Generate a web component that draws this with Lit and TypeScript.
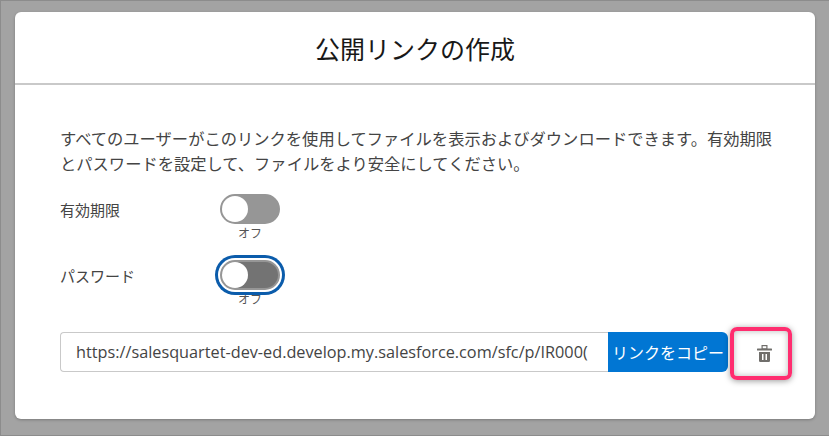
import { LitElement, html, css } from "lit";
import { customElement } from "lit/decorators.js";

@customElement("app-root")
export class AppRoot extends LitElement {
  static styles = css`
    :host {
      display: block;
      width: 829px;
      height: 436px;
      box-sizing: border-box;
      background: #a3a3a3;
      border: 1px solid #8c8c8c;
      border-width: 1px 0 1px 1px;
      padding: 11px 14px 16px 14px;
      font-family: "Open Sans", "Noto Sans CJK JP", sans-serif;
      color: #444444;
      overflow: hidden;
    }
    .card {
      width: 800px;
      height: 407px;
      background: #fff;
      border-radius: 6px;
      box-shadow: 0 1px 3px rgba(0, 0, 0, 0.25);
      display: flex;
      flex-direction: column;
    }
    .head {
      height: 71px;
      border-bottom: 2px solid #c9c9c9;
      display: flex;
      align-items: center;
      justify-content: center;
      font-size: 25px;
      color: #181818;
      font-family: "Noto Sans CJK JP", sans-serif;
    }
    .body {
      padding: 41px 25px 0 45px;
      flex: 1;
      display: flex;
      flex-direction: column;
      position: relative;
    }
    .intro {
      margin: 0;
      font-size: 16.3px;
      line-height: 25px;
      width: 725px;
      font-family: "Noto Sans CJK JP", sans-serif;
    }
    .row {
      display: flex;
      align-items: flex-start;
      font-size: 15px;
      font-family: "Noto Sans CJK JP", sans-serif;
    }
    .row.first { margin-top: 18px; }
    .row.second { margin-top: 20px; }
    .label { width: 160px; line-height: 32px; }
    .tog { width: 60px; display: flex; flex-direction: column; align-items: center; }
    .track {
      width: 60px;
      height: 30px;
      border-radius: 15px;
      background: #969696;
      box-sizing: border-box;
      border: 2px solid #969696;
      display: flex;
      align-items: center;
      position: relative;
    }
    .knob { width: 26px; height: 26px; border-radius: 50%; background: #fff; }
    .focus .track {
      background: #737373;
      border-color: #969696;
      box-shadow: 0 0 0 2px #fff, 0 0 0 5px #0b5cab;
    }
    .cap { font-size: 12px; line-height: 14px; margin-top: 2px; color: #555555; }
    .link { display: flex; align-items: stretch; height: 40px; margin-top: 26px; }
    .url {
      width: 548px;
      flex: none;
      box-sizing: border-box;
      border: 1px solid #c9c9c9;
      border-right: none;
      border-radius: 4px 0 0 4px;
      padding: 0 18px 0 15px;
      font-size: 16.25px;
      line-height: 38px;
      white-space: nowrap;
      overflow: hidden;
    }
    .copy {
      width: 120px;
      flex: none;
      background: #0176d3;
      color: #fff;
      border-radius: 0 6px 6px 0;
      display: flex;
      align-items: center;
      justify-content: center;
      font-size: 16px;
      font-family: "Noto Sans CJK JP", sans-serif;
      white-space: nowrap;
    }
    .trash {
      width: 62px;
      flex: none;
      box-sizing: border-box;
      display: flex;
      align-items: center;
      justify-content: center;
      padding: 3px 0 0 11px;
    }
    .hl {
      position: absolute;
      left: 715px;
      top: 242px;
      width: 62px;
      height: 53px;
      box-sizing: border-box;
      border: 4px solid #ff2d6f;
      border-radius: 7px;
      box-shadow: 0 1px 6px rgba(0, 0, 0, 0.4), inset 0 0 6px rgba(0, 0, 0, 0.28);
    }
  `;

  render() {
    return html`
      <div class="card">
        <div class="head">公開リンクの作成</div>
        <div class="body">
          <p class="intro">すべてのユーザーがこのリンクを使用してファイルを表示およびダウンロードできます。有効期限とパスワードを設定して、ファイルをより安全にしてください。</p>
          <div class="row first">
            <div class="label">有効期限</div>
            <div class="tog"><div class="track"><div class="knob"></div></div><div class="cap">オフ</div></div>
          </div>
          <div class="row second focus">
            <div class="label">パスワード</div>
            <div class="tog"><div class="track"><div class="knob"></div></div><div class="cap">オフ</div></div>
          </div>
          <div class="link">
            <div class="url">https://salesquartet-dev-ed.develop.my.salesforce.com/sfc/p/IR000(</div>
            <div class="copy">リンクをコピー</div>
            <div class="trash">
              <svg width="15" height="17" viewBox="0 0 15 17" fill="#706e6b">
                <rect x="5.1" y="0.6" width="4.8" height="3.4" fill="none" stroke="#706e6b" stroke-width="1.2" />
                <rect x="0" y="3.4" width="15" height="2.2" rx="0.5" />
                <path d="M2 7h11v8.8a1.2 1.2 0 0 1-1.2 1.2H3.2A1.2 1.2 0 0 1 2 15.8z" />
                <rect x="5" y="9" width="1.5" height="6" fill="#fff" />
                <rect x="8.5" y="9" width="1.5" height="6" fill="#fff" />
              </svg>
            </div>
          </div>
          <div class="hl"></div>
        </div>
      </div>
    `;
  }
}
